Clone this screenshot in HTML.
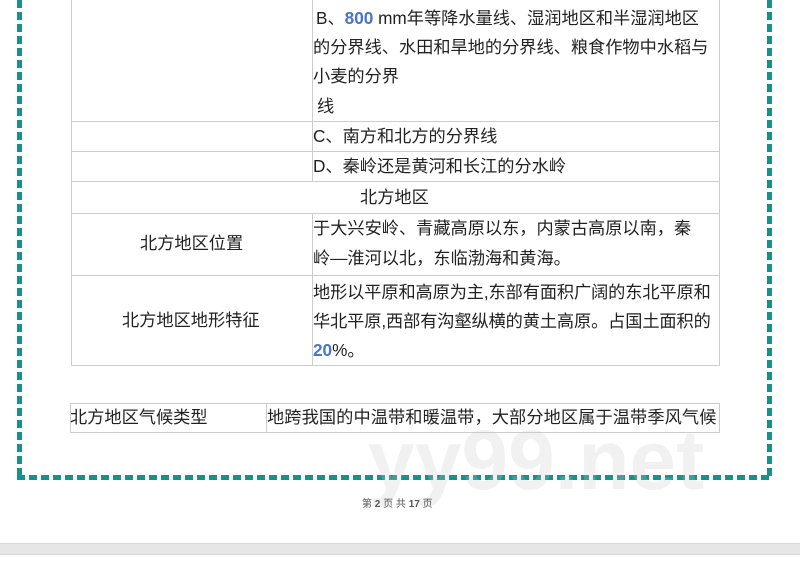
<!DOCTYPE html><html><head><meta charset="utf-8"><style>
body{margin:0;width:800px;height:564px;background:#fff;position:relative;overflow:hidden;font-family:"Liberation Sans","Noto Sans CJK SC",sans-serif;color:#222}
.a{position:absolute}
.vl{width:5px;background:repeating-linear-gradient(to bottom,#1b8f8a 0 8px,transparent 8px 12px)}
.hl{height:5px;background:repeating-linear-gradient(to right,#1b8f8a 0 8px,transparent 8px 12px)}
.ln{background:#ccc}
.t{font-size:17.2px;line-height:29px;white-space:nowrap}
.b{color:#4a74c4;font-weight:bold}
</style></head><body>
<div class="a vl" style="left:17px;top:0;height:480px"></div>
<div class="a vl" style="left:767px;top:0;height:480px"></div>
<div class="a hl" style="left:17px;top:475px;width:755px"></div>
<div class="a ln" style="left:71px;top:0;width:1px;height:366px"></div>
<div class="a ln" style="left:312px;top:0;width:1px;height:181px"></div>
<div class="a ln" style="left:312px;top:213px;width:1px;height:153px"></div>
<div class="a ln" style="left:719px;top:0;width:1px;height:366px"></div>
<div class="a ln" style="left:71px;top:121px;width:649px;height:1px"></div>
<div class="a ln" style="left:71px;top:151px;width:649px;height:1px"></div>
<div class="a ln" style="left:71px;top:181px;width:649px;height:1px"></div>
<div class="a ln" style="left:71px;top:213px;width:649px;height:1px"></div>
<div class="a ln" style="left:71px;top:275px;width:649px;height:1px"></div>
<div class="a ln" style="left:71px;top:365px;width:649px;height:1px"></div>
<div class="a t" style="left:316px;top:4px">B、<span class="b">800</span> mm年等降水量线、湿润地区和半湿润地区</div>
<div class="a t" style="left:313px;top:33px">的分界线、水田和旱地的分界线、粮食作物中水稻与</div>
<div class="a t" style="left:313px;top:62px">小麦的分界</div>
<div class="a t" style="left:317px;top:92px">线</div>
<div class="a t" style="left:313px;top:122px">C、南方和北方的分界线</div>
<div class="a t" style="left:313px;top:152px">D、秦岭还是黄河和长江的分水岭</div>
<div class="a t" style="left:360px;top:183px">北方地区</div>
<div class="a t" style="left:140px;top:229px">北方地区位置</div>
<div class="a t" style="left:313px;top:214px">于大兴安岭、青藏高原以东，内蒙古高原以南，秦</div>
<div class="a t" style="left:313px;top:244px">岭—淮河以北，东临渤海和黄海。</div>
<div class="a t" style="left:122px;top:306px">北方地区地形特征</div>
<div class="a t" style="left:313px;top:278px;letter-spacing:-0.1px">地形以平原和高原为主,东部有面积广阔的东北平原和</div>
<div class="a t" style="left:313px;top:307px;letter-spacing:-0.1px">华北平原,西部有沟壑纵横的黄土高原。占国土面积的</div>
<div class="a t" style="left:313px;top:336px"><span class="b">20</span>%。</div>
<div class="a" style="left:70px;top:403px;width:648px;height:28px;border:1px solid #ccc"></div>
<div class="a ln" style="left:266px;top:403px;width:1px;height:30px"></div>
<div class="a t" style="left:70px;top:403px">北方地区气候类型</div>
<div class="a t" style="left:267px;top:403px;letter-spacing:0.1px">地跨我国的中温带和暖温带，大部分地区属于温带季风气候</div>
<div class="a" style="left:368px;top:412px;font-size:84px;font-weight:bold;color:rgba(200,200,200,0.25);white-space:nowrap">yy99.net</div>
<div class="a" style="left:362px;top:495px;font-size:10px;color:#555">第 <b>2</b> 页 共 <b>17</b> 页</div>
<div class="a" style="left:0;top:543px;width:800px;height:10px;background:#e6e6e6;border-top:1px solid #d8d8d8;border-bottom:1px solid #d8d8d8"></div>
</body></html>
